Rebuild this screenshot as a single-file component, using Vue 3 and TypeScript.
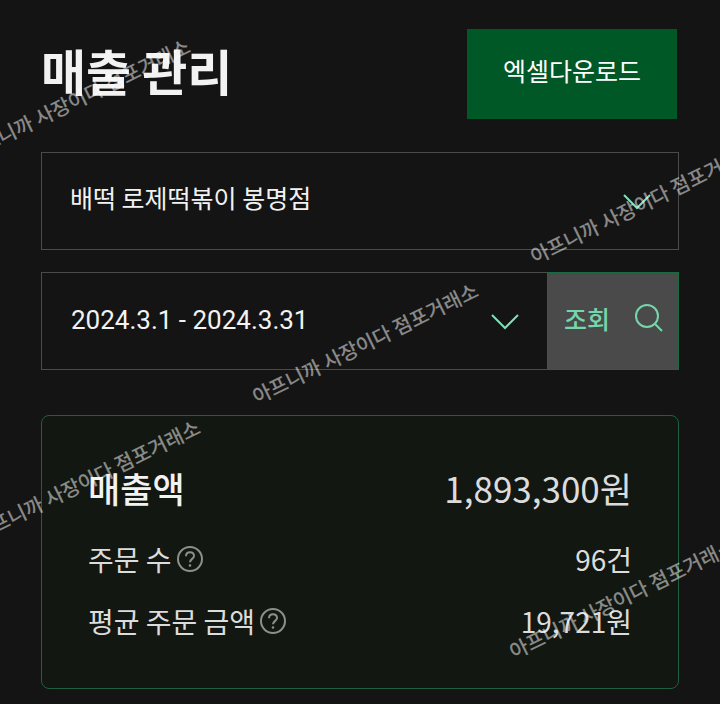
<script setup lang="ts">
import { ref } from 'vue'

interface Metric {
  label: string
  value: string
  main?: boolean
}

const store = ref('배떡 로제떡볶이 봉명점')
const period = ref('2024.3.1 - 2024.3.31')

const metrics: Metric[] = [
  { label: '매출액', value: '1,893,300원', main: true },
  { label: '주문 수', value: '96건' },
  { label: '평균 주문 금액', value: '19,721원' },
]

const watermark = '아프니까 사장이다 점포거래소'
const marks = [
  { left: 77, top: 99 },
  { left: 643, top: 203 },
  { left: 365, top: 343 },
  { left: 87, top: 480 },
  { left: 622, top: 598 },
]
</script>

<template>
  <div class="page">
    <header class="head">
      <h1>매출 관리</h1>
      <button class="excel" type="button">엑셀다운로드</button>
    </header>

    <form class="filters" @submit.prevent>
      <div class="field">
        <select v-model="store" aria-label="매장">
          <option>배떡 로제떡볶이 봉명점</option>
        </select>
        <svg class="chevron" viewBox="0 0 28 16" aria-hidden="true"><path d="M1 1 14 14 27 1" /></svg>
      </div>
      <div class="row">
        <div class="field period">
          <select v-model="period" aria-label="기간">
            <option>2024.3.1 - 2024.3.31</option>
          </select>
          <svg class="chevron" viewBox="0 0 28 16" aria-hidden="true"><path d="M1 1 14 14 27 1" /></svg>
        </div>
        <button class="search" type="submit">
          <span>조회</span>
          <svg viewBox="0 0 28 28" aria-hidden="true">
            <circle cx="12" cy="12" r="11" />
            <path d="M19.8 19.8 27 27" />
          </svg>
        </button>
      </div>
    </form>

    <dl class="summary">
      <div v-for="m in metrics" :key="m.label" class="metric" :class="{ main: m.main }">
        <dt>
          {{ m.label }}
          <button v-if="!m.main" class="help" type="button" :aria-label="m.label + ' 도움말'">
            <svg viewBox="0 0 26 26" aria-hidden="true">
              <circle cx="13" cy="13" r="12" />
              <path d="M9 10.200C9 7.800 10.700 6.300 13 6.300S17 7.800 17 10C17 12.800 13 13 13 16.300" />
              <circle class="dot" cx="13" cy="19.500" r="1.300" />
            </svg>
          </button>
        </dt>
        <dd>{{ m.value }}</dd>
      </div>
    </dl>

    <div class="watermarks" aria-hidden="true">
      <span v-for="(m, i) in marks" :key="i" :style="{ left: m.left + 'px', top: m.top + 'px' }">{{ watermark }}</span>
    </div>
  </div>
</template>

<style>
body {
  background: #141414;
}
</style>

<style scoped>
* {
  box-sizing: border-box;
}

.page {
  position: relative;
  padding: 29px 41px 15px;
  overflow: hidden;
  background: #141414;
  color: #f2f2f2;
  font-family: 'Noto Sans CJK KR', sans-serif;
}

button,
select {
  margin: 0;
  border: 0;
  border-radius: 0;
  font-family: inherit;
  cursor: pointer;
}

.head {
  display: flex;
  align-items: flex-start;
  justify-content: space-between;
  padding-right: 2px;
}

h1 {
  margin: 0;
  font-size: 49px;
  font-weight: 700;
  line-height: 82px;
}

.excel {
  height: 90px;
  padding: 0 36px 8px;
  background: #005826;
  color: #fff;
  font-size: 25px;
}

.filters {
  display: flex;
  flex-direction: column;
  gap: 22px;
  margin-top: 33px;
}

.field {
  display: grid;
  align-items: center;
}

.field > * {
  grid-area: 1 / 1;
}

.field select {
  width: 100%;
  height: 98px;
  padding: 0 72px 8px 28px;
  border: 1px solid #4b4b4b;
  appearance: none;
  background: transparent;
  color: #f2f2f2;
  font-size: 25px;
}

.chevron {
  justify-self: end;
  width: 28px;
  height: 16px;
  margin: 2px 28px 0 0;
  fill: none;
  stroke: #7fe0b5;
  stroke-width: 2;
  pointer-events: none;
}

.row {
  display: flex;
}

.period {
  flex: 1;
}

.field.period select {
  padding-bottom: 2px;
  padding-left: 29px;
  border-right: 0;
  font-family: Roboto, 'Noto Sans CJK KR', sans-serif;
  font-size: 26px;
}

.search {
  display: flex;
  align-items: center;
  justify-content: space-between;
  width: 132px;
  padding: 0 15px 6px 16px;
  border: 1px solid #176b40;
  background: #4a4a4a;
  color: #76d6ab;
  font-size: 25px;
  font-weight: 500;
}

.search svg {
  width: 28px;
  height: 28px;
  fill: none;
  stroke: currentColor;
  stroke-width: 2;
}

.summary {
  display: flex;
  flex-direction: column;
  gap: 20px;
  margin: 45px 0 0;
  padding: 44px 46px 46px;
  border: 1px solid #1c6040;
  border-radius: 8px;
  background: #131712;
}

.metric {
  display: flex;
  align-items: center;
  justify-content: space-between;
  color: #dcdcdc;
  font-size: 28px;
  line-height: 42px;
}

.metric.main {
  margin-bottom: 2px;
  font-size: 35px;
  line-height: 56px;
}

.metric.main dt {
  color: #f2f2f2;
  font-weight: 500;
}

dt {
  display: flex;
  align-items: center;
  gap: 5px;
}

dd {
  margin: 0;
}

.help {
  display: flex;
  padding: 0;
  background: none;
  color: #8d8f8c;
}

.help svg {
  width: 26px;
  height: 26px;
  fill: none;
  stroke: currentColor;
  stroke-width: 2;
}

.help .dot {
  fill: currentColor;
  stroke: none;
}

.watermarks {
  position: absolute;
  inset: 0;
  overflow: hidden;
  pointer-events: none;
}

.watermarks span {
  position: absolute;
  transform: translate(-50%, -50%) rotate(-26deg);
  color: rgba(255, 255, 255, 0.5);
  font-size: 20px;
  font-weight: 500;
  line-height: 30px;
  white-space: nowrap;
}
</style>
